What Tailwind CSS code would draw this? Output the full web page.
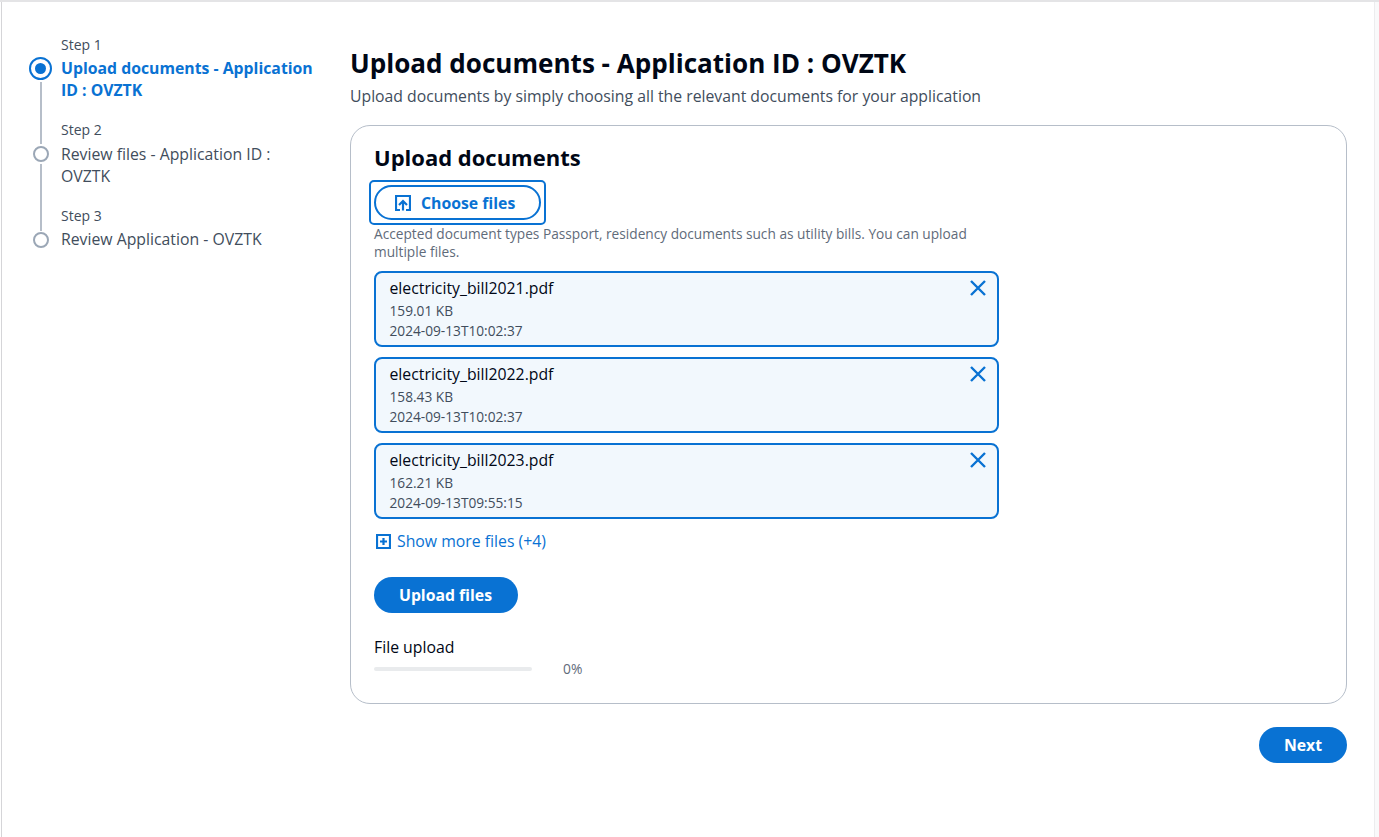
<!DOCTYPE html>
<html><head><meta charset="utf-8"><script src="https://cdn.jsdelivr.net/npm/@tailwindcss/browser@4"></script></head>
<body class="bg-white">
<div class="w-[1379px] h-[837px] overflow-hidden flex flex-col font-['Open_Sans',sans-serif] text-[#000716] border-t-2 border-[#e4e4e6]">
<div class="flex flex-1 min-h-0">
  <div class="w-[1px] ml-[1px] bg-[#d5d5d8]"></div>
  <!-- sidebar -->
  <aside class="w-[348px] pt-[33px] pl-[27px] shrink-0">
    <ol class="flex flex-col text-[#414d5c]">
      <li class="relative pl-[32px] h-[85px]">
        <div class="text-[14px] leading-[20px]">Step 1</div>
        <div class="text-[15.8px] leading-[22px] mt-[2px] font-bold text-[#0972d3] w-[256px]">Upload documents - Application ID : OVZTK</div>
        <span class="absolute left-[0px] top-[21.5px] w-[23px] h-[23px] rounded-full border-2 border-[#0972d3] flex items-center justify-center"><span class="w-[11px] h-[11px] rounded-full bg-[#0972d3]"></span></span>
        <span class="absolute left-[11px] top-[47px] w-[2px] h-[62px] bg-[#b6bec9]"></span>
      </li>
      <li class="relative pl-[32px] h-[86px]">
        <div class="text-[14px] leading-[20px]">Step 2</div>
        <div class="text-[15.8px] leading-[22px] mt-[3px] w-[240px]">Review files - Application ID : OVZTK</div>
        <span class="absolute left-[4px] top-[26px] w-[16px] h-[16px] rounded-full border-2 border-[#9ba7b6]"></span>
        <span class="absolute left-[11px] top-[44px] w-[2px] h-[67px] bg-[#b6bec9]"></span>
      </li>
      <li class="relative pl-[32px]">
        <div class="text-[14px] leading-[20px]">Step 3</div>
        <div class="text-[15.8px] leading-[22px] mt-[2px]">Review Application - OVZTK</div>
        <span class="absolute left-[4px] top-[25.5px] w-[16px] h-[16px] rounded-full border-2 border-[#9ba7b6]"></span>
      </li>
    </ol>
  </aside>
  <!-- main -->
  <main class="w-[997px] shrink-0 pt-[41px]">
    <h1 class="text-[26.07px] leading-[40px] font-bold">Upload documents - Application ID : OVZTK</h1>
    <p class="text-[15.78px] leading-[22px] text-[#414d5c] mt-[2px]">Upload documents by simply choosing all the relevant documents for your application</p>
    <section class="mt-[18px] h-[579px] rounded-[20px] border border-[#b6bec9] px-[23px] pt-[15px]">
      <h2 class="text-[22px] leading-[32px] font-bold">Upload documents</h2>
      <div class="mt-[7px] -ml-[5px] w-fit rounded-[5px] border-2 border-[#0972d3] p-[3px]">
      <button class="w-[167px] h-[35px] rounded-full border-2 border-[#0972d3] text-[#0972d3] font-bold text-[15.8px] flex items-center justify-start pl-[19px] gap-[10px]">
        <svg width="16" height="16" viewBox="0 0 16 16" fill="none" stroke="#0972d3" stroke-width="2.200"><path d="M5 15H1V1h14v14h-4"/><path d="M8 15.500V6M4 10l4-4 4 4"/></svg>
        <span class="pt-[2px]">Choose files</span>
      </button>
      </div>
      <p class="w-[620px] text-[13.7px] leading-[18px] text-[#5f6b7a]">Accepted document types Passport, residency documents such as utility bills. You can upload multiple files.</p>
      <ul class="mt-[10px] w-[625px] flex flex-col gap-[10px]">
        <li class="relative h-[76px] rounded-[8px] border-2 border-[#0972d3] bg-[#f2f8fd] pl-[13.5px] pt-[4px]">
          <div class="text-[15.8px] leading-[22px]">electricity_bill2021.pdf</div>
          <div class="text-[13.7px] leading-[20px] text-[#414d5c] mt-[2px]">159.01 KB</div>
          <div class="text-[13.7px] leading-[20px] text-[#414d5c]">2024-09-13T10:02:37</div>
          <svg class="absolute right-[11px] top-[7px]" width="16" height="16" viewBox="0 0 16 16" fill="none" stroke="#0972d3" stroke-width="2.400"><path d="m1 1 14 14M15 1 1 15"/></svg>
        </li>
        <li class="relative h-[76px] rounded-[8px] border-2 border-[#0972d3] bg-[#f2f8fd] pl-[13.5px] pt-[4px]">
          <div class="text-[15.8px] leading-[22px]">electricity_bill2022.pdf</div>
          <div class="text-[13.7px] leading-[20px] text-[#414d5c] mt-[2px]">158.43 KB</div>
          <div class="text-[13.7px] leading-[20px] text-[#414d5c]">2024-09-13T10:02:37</div>
          <svg class="absolute right-[11px] top-[7px]" width="16" height="16" viewBox="0 0 16 16" fill="none" stroke="#0972d3" stroke-width="2.400"><path d="m1 1 14 14M15 1 1 15"/></svg>
        </li>
        <li class="relative h-[76px] rounded-[8px] border-2 border-[#0972d3] bg-[#f2f8fd] pl-[13.5px] pt-[4px]">
          <div class="text-[15.8px] leading-[22px]">electricity_bill2023.pdf</div>
          <div class="text-[13.7px] leading-[20px] text-[#414d5c] mt-[2px]">162.21 KB</div>
          <div class="text-[13.7px] leading-[20px] text-[#414d5c]">2024-09-13T09:55:15</div>
          <svg class="absolute right-[11px] top-[7px]" width="16" height="16" viewBox="0 0 16 16" fill="none" stroke="#0972d3" stroke-width="2.400"><path d="m1 1 14 14M15 1 1 15"/></svg>
        </li>
      </ul>
      <a class="mt-[11px] flex items-center gap-[6px] text-[15.8px] leading-[22px] text-[#0972d3]">
        <svg class="ml-[2px]" width="15" height="15" viewBox="0 0 15 15" fill="none" stroke="#0972d3" stroke-width="2.200"><path d="M1 1h13v13H1zM7.500 4v7M4 7.500h7"/></svg>
        <span>Show more files (+4)</span>
      </a>
      <button class="mt-[25px] block w-[144px] h-[36px] pt-[2px] pr-[1px] rounded-full bg-[#0972d3] text-white font-bold text-[15.8px]">Upload files</button>
      <div class="mt-[23px] text-[15.8px] leading-[22px]">File upload</div>
      <div class="mt-[1px] flex items-center h-[20px]">
        <div class="w-[158px] h-[4px] rounded-full bg-[#e9ebed]"></div>
        <span class="ml-[31px] text-[13.8px] leading-[20px] text-[#5f6b7a]">0%</span>
      </div>
    </section>
    <div class="flex justify-end mt-[23px]">
      <button class="w-[88px] h-[36px] pt-[2px] rounded-full bg-[#0972d3] text-white font-bold text-[15.8px]">Next</button>
    </div>
  </main>
  <div class="flex-1"></div>
  <div class="w-[5px] border-l border-[#ececee] bg-[#f9f9fa]"></div>
</div>
</div>
</body></html>
